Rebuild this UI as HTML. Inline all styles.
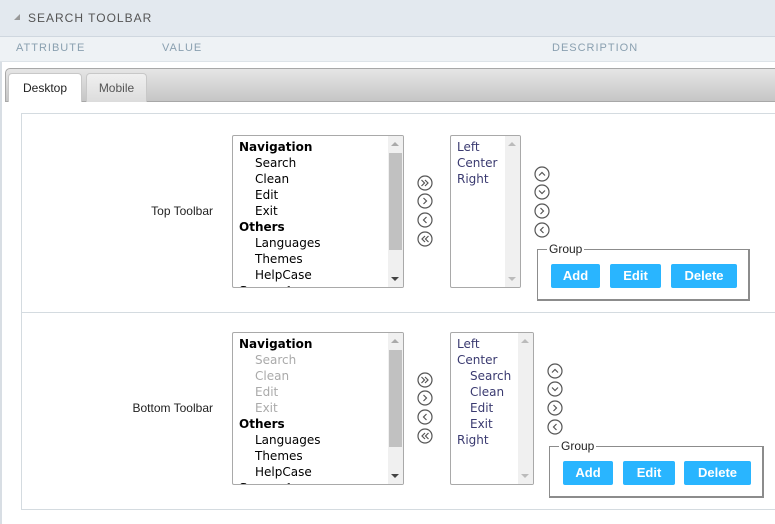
<!DOCTYPE html>
<html><head><style>
*{margin:0;padding:0;box-sizing:border-box}
body{width:775px;height:524px;overflow:hidden;background:#fff;font-family:"Liberation Sans",Tahoma,sans-serif;position:relative}
.a{position:absolute}
.hdr{left:0;top:0;width:775px;height:37px;background:#e3e9ef;border-bottom:1px solid #cfd7df}
.cols{left:0;top:37px;width:775px;height:25px;background:#eef2f5;border-bottom:1px solid #dde3e8}
.cols span{position:absolute;top:5px;font-size:11px;letter-spacing:1px;color:#8aa0b0}
.tabs{left:5px;top:68px;width:780px;height:34px;border:1px solid #a8a8a8;border-radius:5px 0 0 0;background:linear-gradient(#e6e6e6,#c6c6c6)}
.tab{top:73px;height:29px;font-size:12px;text-align:center;line-height:28px;border:1px solid #c8c8c8;border-bottom:none;border-radius:4px 4px 0 0}
.box{left:21px;top:113px;width:760px;height:397px;border:1px solid #d4dbe0;border-right:none}
.lbl{font-size:12px;color:#222;text-align:right;width:200px}
.list{border:1px solid #a9a9a9;border-radius:2px;background:#fff;font-family:"DejaVu Sans",Tahoma,sans-serif;font-size:12px;overflow:hidden}
.list p{height:16px;line-height:16px;white-space:nowrap}
.sb{position:absolute;right:0;top:0;width:15px;height:100%;background:#f0f0f0}
.th{position:absolute;left:1px;width:13px;background:#c1c1c1}
.up,.dn{position:absolute;left:3px;width:0;height:0;border-left:4px solid transparent;border-right:4px solid transparent}
.up{top:6px;border-bottom:4px solid #aaa}
.dn{bottom:6px;border-top:4px solid #444}
.grp{border:2px solid #8c8c8c;border-width:1px 2px 2px 1px}
.lg{position:absolute;top:-8px;left:9px;background:#fff;font-size:12px;padding:0 2px;line-height:14px;color:#222}
.btn{position:absolute;height:24px;background:#29b5ff;color:#fff;font-size:13px;font-weight:bold;text-align:center;line-height:24px;border-radius:2px}
</style></head><body>
<div class="a" style="left:0;top:0;width:2px;height:524px;background:#d8dee4"></div>
<div class="a hdr"><span class="a" style="left:14px;top:14px;width:0;height:0;border-left:6px solid transparent;border-bottom:6px solid #999"></span><span class="a" style="left:28px;top:11px;font-size:12px;letter-spacing:1px;color:#555">SEARCH TOOLBAR</span></div>
<div class="a cols"><span style="left:16px">ATTRIBUTE</span><span style="left:162px">VALUE</span><span style="left:552px">DESCRIPTION</span></div>
<div class="a tabs"></div>
<div class="a tab" style="left:8px;width:74px;background:#fff;color:#222">Desktop</div>
<div class="a tab" style="left:86px;width:61px;background:linear-gradient(#f0f0f0,#dcdcdc);color:#555">Mobile</div>
<div class="a box"></div>
<div class="a" style="left:22px;top:312px;width:760px;height:1px;background:#d4dbe0"></div>

<!-- ROW 1 -->
<div class="a lbl" style="left:13px;top:204px">Top Toolbar</div>
<div class="a list" style="left:232px;top:135px;width:172px;height:153px;padding:3px 0 0 6px">
<p style="font-weight:bold">Navigation</p><p style="padding-left:16px">Search</p><p style="padding-left:16px">Clean</p><p style="padding-left:16px">Edit</p><p style="padding-left:16px">Exit</p><p style="font-weight:bold">Others</p><p style="padding-left:16px">Languages</p><p style="padding-left:16px">Themes</p><p style="padding-left:16px">HelpCase</p><p style="font-weight:bold">Separator</p>
<div class="sb"><div class="th" style="top:17px;height:97px"></div><div class="up"></div><div class="dn"></div></div></div>
<div class="a list" style="left:450px;top:135px;width:71px;height:153px;padding:3px 0 0 6px;color:#3a3a70">
<p>Left</p><p>Center</p><p>Right</p>
<div class="sb"><div class="up" style="border-bottom-color:#bbb"></div><div class="dn" style="border-top-color:#bbb"></div></div></div>
<svg class="a" style="left:416px;top:175px" width="18" height="72" fill="none" stroke="#555" stroke-width="1.2"><circle cx="9" cy="8" r="7"/><circle cx="9" cy="26" r="7"/><circle cx="9" cy="45" r="7"/><circle cx="9" cy="64" r="7"/><path d="M5.5 5l3 3-3 3M9 5l3 3-3 3M7.5 23l3 3-3 3M10.5 42l-3 3 3 3M9 61l-3 3 3 3M12.5 61l-3 3 3 3"/></svg>
<svg class="a" style="left:533px;top:166px" width="18" height="72" fill="none" stroke="#555" stroke-width="1.2"><circle cx="9" cy="8" r="7"/><circle cx="9" cy="26" r="7"/><circle cx="9" cy="45" r="7"/><circle cx="9" cy="64" r="7"/><path d="M6 9.5l3-3 3 3M6 24.5l3 3 3-3M7.5 42l3 3-3 3M10.5 61l-3 3 3 3"/></svg>
<div class="a grp" style="left:537px;top:249px;width:213px;height:52px"><span class="lg">Group</span>
<div class="btn" style="left:13px;top:14px;width:49px">Add</div><div class="btn" style="left:72px;top:14px;width:51px">Edit</div><div class="btn" style="left:133px;top:14px;width:66px">Delete</div></div>

<!-- ROW 2 -->
<div class="a lbl" style="left:13px;top:401px">Bottom Toolbar</div>
<div class="a list" style="left:232px;top:332px;width:172px;height:153px;padding:3px 0 0 6px">
<p style="font-weight:bold">Navigation</p><p style="padding-left:16px;color:#aaa">Search</p><p style="padding-left:16px;color:#aaa">Clean</p><p style="padding-left:16px;color:#aaa">Edit</p><p style="padding-left:16px;color:#aaa">Exit</p><p style="font-weight:bold">Others</p><p style="padding-left:16px">Languages</p><p style="padding-left:16px">Themes</p><p style="padding-left:16px">HelpCase</p><p style="font-weight:bold">Separator</p>
<div class="sb"><div class="th" style="top:17px;height:97px"></div><div class="up"></div><div class="dn"></div></div></div>
<div class="a list" style="left:450px;top:332px;width:84px;height:153px;padding:3px 0 0 6px;color:#3a3a70">
<p>Left</p><p>Center</p><p style="padding-left:13px">Search</p><p style="padding-left:13px">Clean</p><p style="padding-left:13px">Edit</p><p style="padding-left:13px">Exit</p><p>Right</p>
<div class="sb"><div class="up" style="border-bottom-color:#bbb"></div><div class="dn" style="border-top-color:#bbb"></div></div></div>
<svg class="a" style="left:416px;top:372px" width="18" height="72" fill="none" stroke="#555" stroke-width="1.2"><circle cx="9" cy="8" r="7"/><circle cx="9" cy="26" r="7"/><circle cx="9" cy="45" r="7"/><circle cx="9" cy="64" r="7"/><path d="M5.5 5l3 3-3 3M9 5l3 3-3 3M7.5 23l3 3-3 3M10.5 42l-3 3 3 3M9 61l-3 3 3 3M12.5 61l-3 3 3 3"/></svg>
<svg class="a" style="left:546px;top:363px" width="18" height="72" fill="none" stroke="#555" stroke-width="1.2"><circle cx="9" cy="8" r="7"/><circle cx="9" cy="26" r="7"/><circle cx="9" cy="45" r="7"/><circle cx="9" cy="64" r="7"/><path d="M6 9.5l3-3 3 3M6 24.5l3 3 3-3M7.5 42l3 3-3 3M10.5 61l-3 3 3 3"/></svg>
<div class="a grp" style="left:549px;top:446px;width:215px;height:52px"><span class="lg">Group</span>
<div class="btn" style="left:13px;top:14px;width:50px">Add</div><div class="btn" style="left:73px;top:14px;width:52px">Edit</div><div class="btn" style="left:134px;top:14px;width:67px">Delete</div></div>
</body></html>
